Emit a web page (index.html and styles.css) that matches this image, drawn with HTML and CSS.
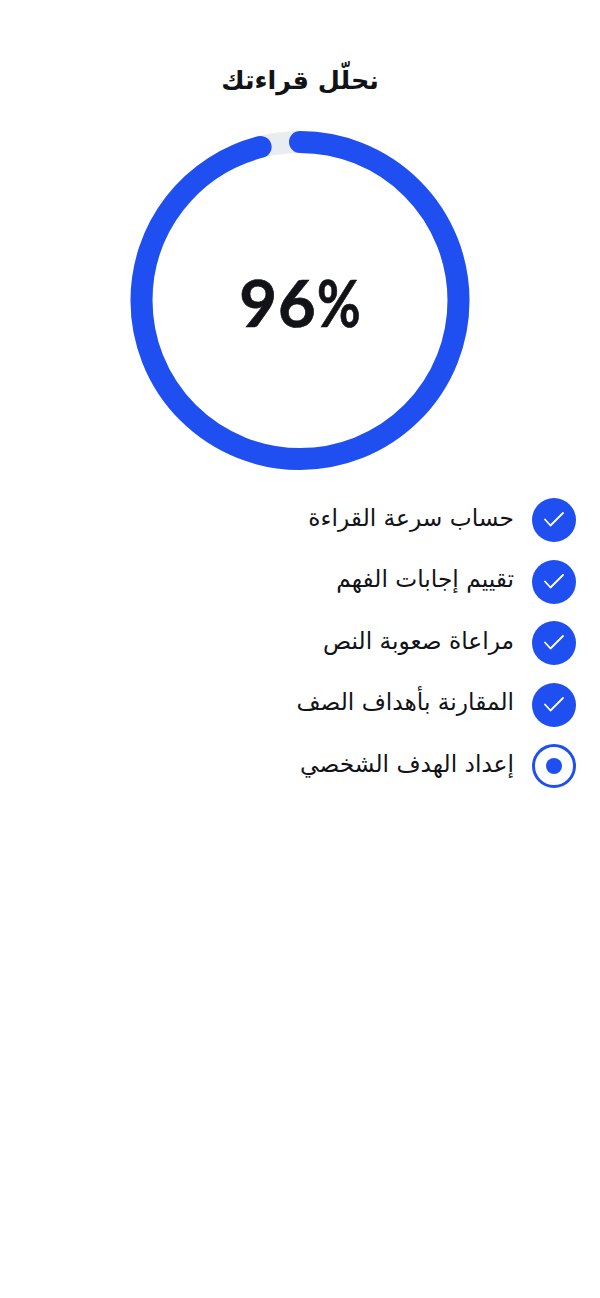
FILE: index.html
```html
<!DOCTYPE html>
<html lang="ar" dir="rtl">
<head>
<meta charset="utf-8">
<title>نحلّل قراءتك</title>
<link rel="stylesheet" href="styles.css">
</head>
<body>
<main class="screen">
  <h1 class="title">نحلّل قراءتك</h1>
  <div class="ring">
    <svg class="ring-svg" width="340" height="340" viewBox="0 0 340 340">
      <circle class="ring-track" cx="170" cy="170.500" r="158.500"/>
      <circle class="ring-value" cx="170" cy="170.500" r="158.500" pathLength="100" stroke-dasharray="96 100" transform="rotate(-90 170 170.500)"/>
    </svg>
    <div class="ring-label" dir="ltr"><span class="digits">96</span><span class="percent">%</span></div>
  </div>
  <ul class="steps">
    <li class="step"><svg class="icon" width="44" height="44" viewBox="0 0 44 44"><circle class="fill" cx="22" cy="22" r="22"/><path class="check" d="M13 21.500l5.500 6L31 15"/></svg><span class="step-text">حساب سرعة القراءة</span></li>
    <li class="step"><svg class="icon" width="44" height="44" viewBox="0 0 44 44"><circle class="fill" cx="22" cy="22" r="22"/><path class="check" d="M13 21.500l5.500 6L31 15"/></svg><span class="step-text">تقييم إجابات الفهم</span></li>
    <li class="step"><svg class="icon" width="44" height="44" viewBox="0 0 44 44"><circle class="fill" cx="22" cy="22" r="22"/><path class="check" d="M13 21.500l5.500 6L31 15"/></svg><span class="step-text">مراعاة صعوبة النص</span></li>
    <li class="step"><svg class="icon" width="44" height="44" viewBox="0 0 44 44"><circle class="fill" cx="22" cy="22" r="22"/><path class="check" d="M13 21.500l5.500 6L31 15"/></svg><span class="step-text">المقارنة بأهداف الصف</span></li>
    <li class="step"><svg class="icon" width="44" height="44" viewBox="0 0 44 44"><circle class="outline" cx="22" cy="22" r="20.500"/><circle class="fill" cx="22" cy="22" r="8"/></svg><span class="step-text">إعداد الهدف الشخصي</span></li>
  </ul>
</main>
</body>
</html>
```
FILE: styles.css
```css
* { box-sizing: border-box; }
html, body { margin: 0; padding: 0; background: #fff; }
body { font-family: "DejaVu Sans", "Noto Sans", sans-serif; color: #111317; }
.screen { height: 1298px; overflow: hidden; display: flex; flex-direction: column; align-items: center; padding-top: 59px; }
.title { margin: 0; height: 42px; line-height: 42px; font-size: 25.500px; font-weight: 700; text-align: center; }
.ring { position: relative; width: 340px; height: 340px; margin-top: 29px; }
.ring-svg { display: block; }
.ring-track { fill: none; stroke: #e9edf2; stroke-width: 22; }
.ring-value { fill: none; stroke: #1f4ff0; stroke-width: 22; stroke-linecap: round; }
.ring-label { position: absolute; inset: 0; display: flex; align-items: center; justify-content: center; padding-top: 4px; font-family: Lato, sans-serif; font-weight: 700; font-size: 65px; color: #111317; -webkit-text-stroke: .7px #111317; }
.digits { letter-spacing: 1px; }
.percent { display: inline-block; width: 44px; transform: scaleX(.82); transform-origin: left center; }
.steps { list-style: none; margin: 28px 0 0; padding: 0 24px; width: 100%; display: flex; flex-direction: column; gap: 17.500px; }
.step { display: flex; align-items: center; gap: 18px; height: 44px; }
.icon { display: block; flex: none; }
.fill { fill: #1f4ff0; }
.outline { fill: none; stroke: #1f4ff0; stroke-width: 3; }
.check { fill: none; stroke: #fff; stroke-width: 1.800; stroke-linecap: round; stroke-linejoin: round; }
.step-text { font-size: 23.300px; line-height: 40px; padding-bottom: 5px; color: #111317; }
```
